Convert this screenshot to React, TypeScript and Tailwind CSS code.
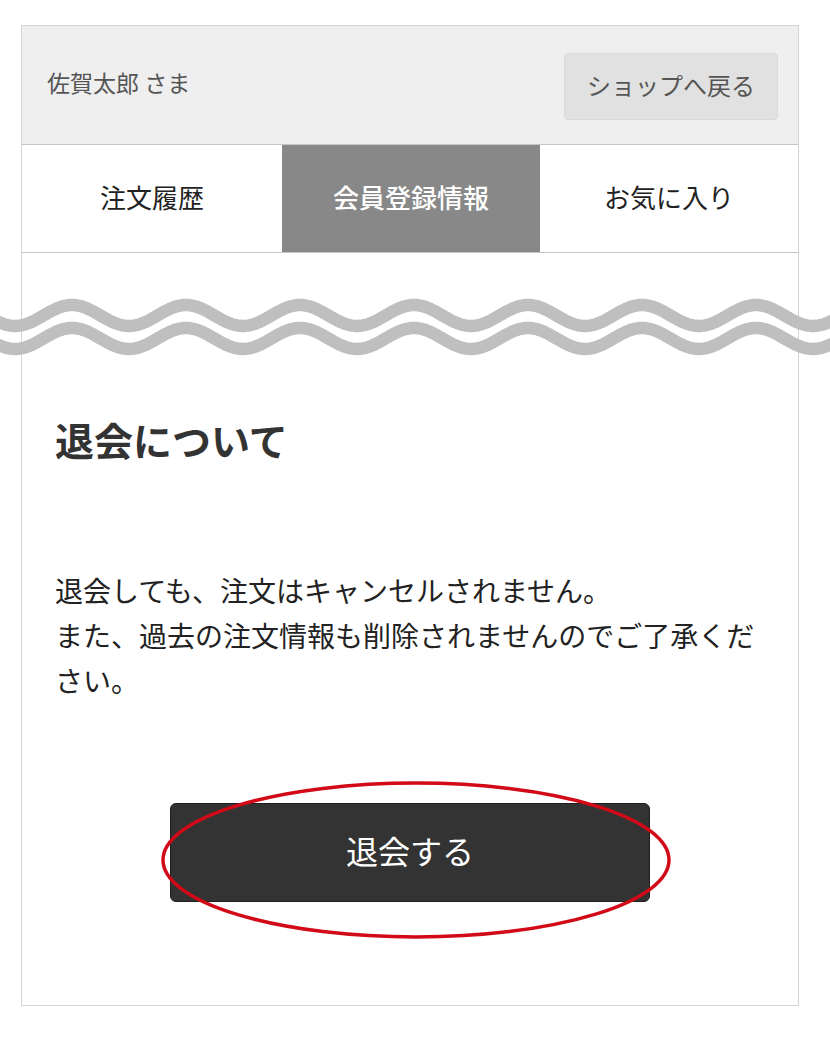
import React from "react";

function wavePath(cy: number, amp: number, width: number): string {
  const pts: string[] = [];
  for (let x = -10; x <= width + 10; x += 2) {
    const y = cy - amp * Math.cos((2 * Math.PI * (x - 72)) / 114);
    pts.push(`${x === -10 ? "M" : "L"}${x},${y.toFixed(2)}`);
  }
  return pts.join(" ");
}

export default function App() {
  return (
    <div className="min-h-[1037px] w-[830px] bg-white pt-[25px] font-['Noto_Sans_CJK_JP',sans-serif]">
      <div className="ml-[21px] w-[778px] border border-[#d4d4d4]">
        {/* header */}
        <div className="flex h-[119px] items-center justify-between border-b border-[#c6c6c6] bg-[#efefef] pl-[25px] pr-[20px]">
          <span className="mb-[5px] text-[23px] leading-none text-[#555]">佐賀太郎 さま</span>
          <button className="mt-[3px] flex h-[67px] w-[214px] items-center justify-center rounded-[4px] border border-[#d9d9d9] bg-[#e1e1e1] pb-[3px] text-[24px] text-[#555]">
            ショップへ戻る
          </button>
        </div>
        {/* tabs */}
        <div className="flex h-[108px] border-b border-[#c4c4c4]">
          <div className="flex w-[260px] items-center justify-center pb-[5px] text-[26px] text-[#222]">注文履歴</div>
          <div className="flex w-[258px] items-center justify-center bg-[#888888] pb-[5px] text-[26px] font-medium text-white">会員登録情報</div>
          <div className="flex flex-1 items-center justify-center pb-[5px] text-[26px] text-[#222]">お気に入り</div>
        </div>
        {/* wave */}
        <div className="relative ml-[-22px] mt-[37px] h-[70px] w-[830px]">
          <svg width="830" height="70" viewBox="0 0 830 70" className="block">
            <path d={wavePath(25.5, 10.5, 830)} fill="none" stroke="#bfbfbf" strokeWidth="12.5" />
            <path d={wavePath(48.5, 10.5, 830)} fill="none" stroke="#bfbfbf" strokeWidth="12.5" />
          </svg>
        </div>
        {/* content */}
        <div className="px-[33px] pt-[56px]">
          <h2 className="text-[39px] font-bold leading-[46px] text-[#333]">退会について</h2>
          <p className="mt-[106px] text-[28px] leading-[45px] text-[#222]">
            退会しても、注文はキャンセルされません。
            <br />
            また、過去の注文情報も削除されませんのでご了承ください。
          </p>
        </div>
        <div className="flex justify-center pb-[103px] pt-[100px]">
          <div className="relative">
            <button className="flex h-[99px] w-[480px] items-center justify-center rounded-[6px] border border-[#1e1e1e] bg-[#333333] pb-[6px] text-[32px] text-white">
              退会する
            </button>
            <svg
              width="516"
              height="164"
              viewBox="0 0 516 164"
              className="pointer-events-none absolute left-[-12px] top-[-25px]"
            >
              <ellipse cx="258" cy="82" rx="253" ry="77" fill="none" stroke="#d20a18" strokeWidth="3.5" />
            </svg>
          </div>
        </div>
      </div>
    </div>
  );
}
